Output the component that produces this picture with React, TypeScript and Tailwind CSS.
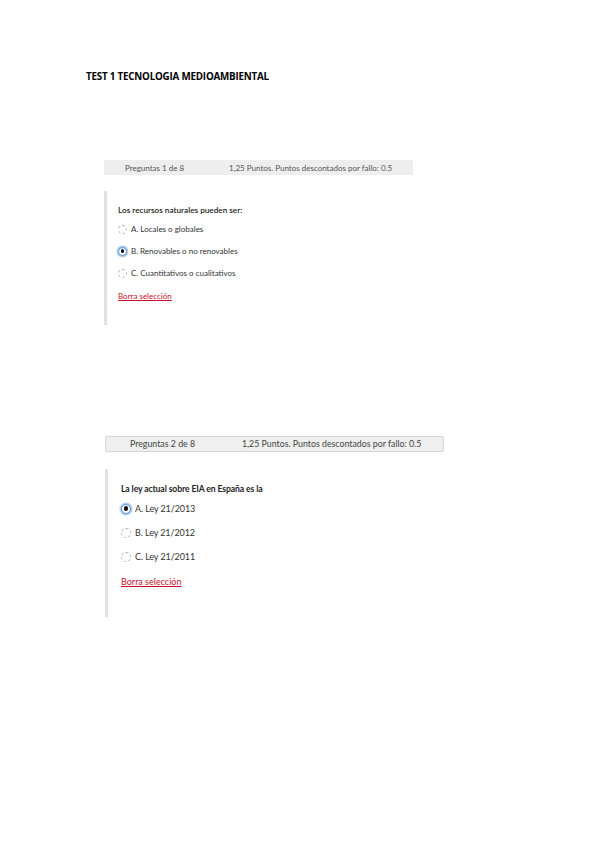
import { useState } from 'react';

const questions = [
    {
        id: 1,
        header: 'Preguntas 1 de 8',
        points: '1,25 Puntos. Puntos descontados por fallo: 0.5',
        text: 'Los recursos naturales pueden ser:',
        options: ['A. Locales o globales', 'B. Renovables o no renovables', 'C. Cuantitativos o cualitativos'],
        selected: 1,
    },
    {
        id: 2,
        header: 'Preguntas 2 de 8',
        points: '1,25 Puntos. Puntos descontados por fallo: 0.5',
        text: 'La ley actual sobre EIA en España es la',
        options: ['A. Ley 21/2013', 'B. Ley 21/2012', 'C. Ley 21/2011'],
        selected: 0,
    },
];

function Radio({ checked, size }: { checked: boolean; size: string }) {
    if (checked) {
        return (
            <span className={`${size} shrink-0 rounded-full border border-[#5b8fd6] bg-white flex items-center justify-center shadow-[0_0_0_1.5px_rgba(110,160,230,0.55)]`}>
                <span className="w-[55%] h-[55%] rounded-full bg-[#111]" />
            </span>
        );
    }
    return <span className={`${size} shrink-0 rounded-full border border-dashed border-[#b8b8b8] bg-white`} />;
}

export default function App() {
    const [answers, setAnswers] = useState<Record<number, number | null>>({ 1: 1, 2: 0 });

    const pick = (id: number, idx: number | null) => setAnswers((a) => ({ ...a, [id]: idx }));

    const q1 = questions[0];
    const q2 = questions[1];

    return (
        <div className="w-[599px] h-[848px] bg-white text-[#222] font-['Lato','Liberation_Sans',sans-serif] overflow-hidden">
            <h1 className="pt-[71px] pl-[86px] text-[9.8px] leading-[12px] font-bold tracking-[-0.2px] text-black font-['Open_Sans','Liberation_Sans',sans-serif]">
                TEST 1 TECNOLOGIA MEDIOAMBIENTAL
            </h1>

            {/* Question 1 */}
            <div className="mt-[77px] ml-[104px] w-[309px] h-[15px] bg-[#eeeeee] flex items-center text-[8px] text-[#555]">
                <span className="pl-[21px] w-[125px]">{q1.header}</span>
                <span>{q1.points}</span>
            </div>

            <div className="mt-[16px] ml-[104px] h-[134px] border-l-[3px] border-[#e2e2e2] pl-[11px] pt-[13px]">
                <p className="text-[8.2px] leading-[12px] font-semibold text-[#222]">{q1.text}</p>
                <div className="mt-[7px] flex flex-col gap-[10px]">
                    {q1.options.map((opt, i) => (
                        <label key={opt} className="flex items-center gap-[4px] text-[8px] leading-[12px] text-[#333] cursor-pointer" onClick={() => pick(q1.id, i)}>
                            <Radio checked={answers[q1.id] === i} size="w-[9px] h-[9px]" />
                            <span>{opt}</span>
                        </label>
                    ))}
                </div>
                <button onClick={() => pick(q1.id, null)} className="mt-[11px] text-[8px] leading-[12px] text-[#c8102e] underline">
                    Borra selección
                </button>
            </div>

            {/* Question 2 */}
            <div className="mt-[111px] ml-[105px] w-[339px] h-[16px] bg-[#efefef] border border-[#d6d6d6] rounded-[2px] flex items-center text-[8.8px] text-[#444]">
                <span className="pl-[24px] w-[136px]">{q2.header}</span>
                <span>{q2.points}</span>
            </div>

            <div className="mt-[17px] ml-[105px] h-[148px] border-l-[3px] border-[#e2e2e2] pl-[13px] pt-[14px]">
                <p className="text-[8.6px] leading-[13px] font-bold tracking-[-0.1px] text-[#222]">{q2.text}</p>
                <div className="mt-[6px] flex flex-col gap-[11px]">
                    {q2.options.map((opt, i) => (
                        <label key={opt} className="flex items-center gap-[4px] text-[9px] leading-[13px] tracking-[-0.1px] text-[#333] cursor-pointer" onClick={() => pick(q2.id, i)}>
                            <Radio checked={answers[q2.id] === i} size="w-[10px] h-[10px]" />
                            <span>{opt}</span>
                        </label>
                    ))}
                </div>
                <button onClick={() => pick(q2.id, null)} className="mt-[12px] text-[9px] leading-[13px] text-[#c8102e] underline">
                    Borra selección
                </button>
            </div>
        </div>
    );
}
